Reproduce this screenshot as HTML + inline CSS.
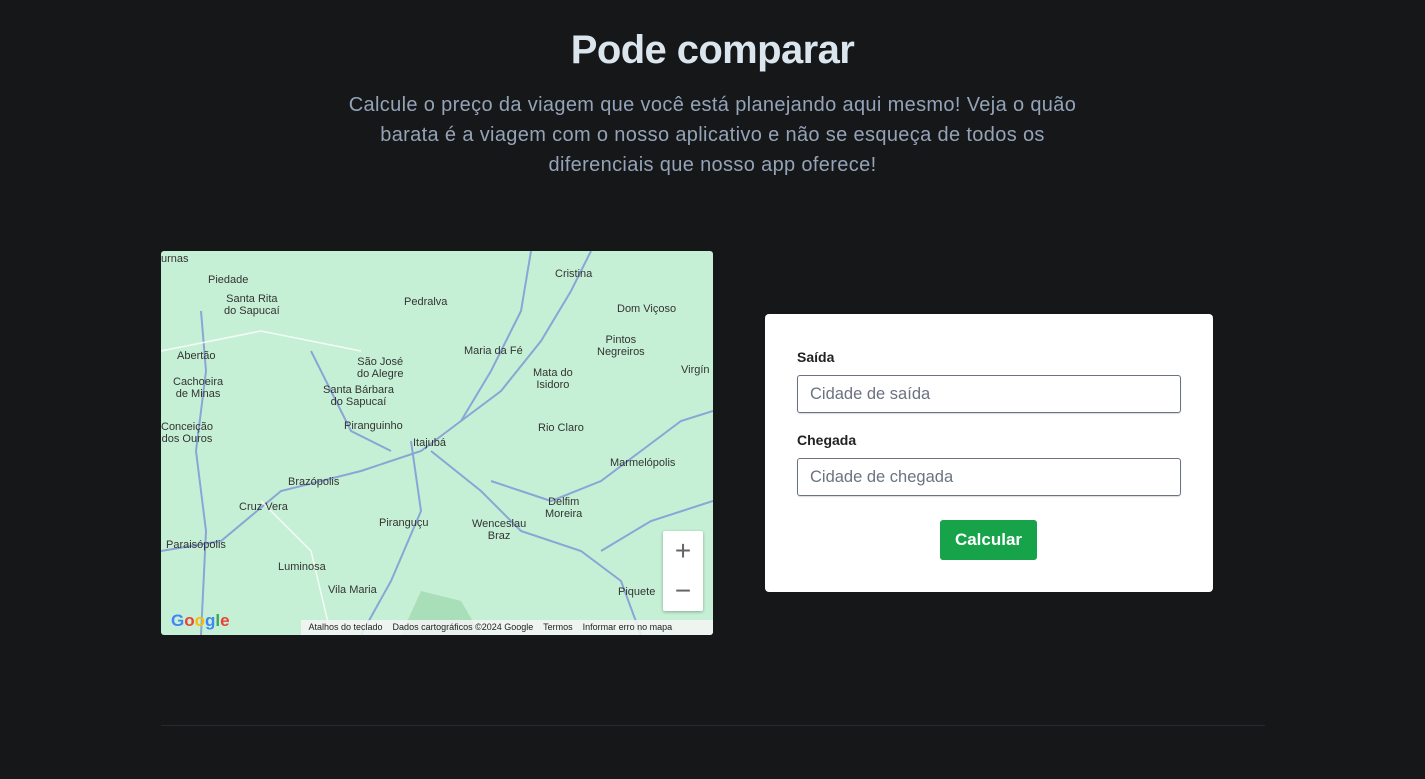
<!DOCTYPE html>
<html><head><meta charset="utf-8"><style>
body{margin:0;background:#161719;width:1425px;height:779px;overflow:hidden;font-family:"Liberation Sans",sans-serif;position:relative}
h1{position:absolute;top:26px;left:0;width:1425px;text-align:center;margin:0;color:#dbe5ee;font-size:40px;font-weight:bold;letter-spacing:-0.6px;line-height:48px}
.sub{position:absolute;top:90px;left:0;width:1425px;text-align:center;color:#94a3b8;font-size:20px;letter-spacing:0.35px;line-height:30px}
.map{position:absolute;left:161px;top:251px;width:552px;height:384px;background:#c6f0d5;overflow:hidden;border-radius:3px}
.map span{position:absolute;font-size:11px;color:#333;line-height:12px;text-align:center}
.card{position:absolute;left:765px;top:314px;width:448px;height:278px;background:#fff;border-radius:4px}
.lbl{position:absolute;left:32px;font-size:14px;font-weight:bold;color:#222}
.inp{position:absolute;left:32px;width:384px;height:38px;border:1px solid #6b7280;border-radius:3px;font-size:16.5px;color:#6b7280;line-height:36px;padding-left:12px;box-sizing:border-box;box-shadow:0 1px 1px rgba(0,0,0,.15)}
.btn{position:absolute;left:175px;top:206px;width:97px;height:40px;background:#16a34a;border-radius:3px;color:#fff;font-weight:bold;font-size:17px;text-align:center;line-height:40px}
.hr{position:absolute;left:161px;top:725px;width:1104px;height:1px;background:#26292e}
</style></head><body>
<h1>Pode comparar</h1>
<div class="sub">Calcule o preço da viagem que você está planejando aqui mesmo! Veja o quão<br>barata é a viagem com o nosso aplicativo e não se esqueça de todos os<br>diferenciais que nosso app oferece!</div>
<div class="map">
<svg width="552" height="384" style="position:absolute;left:0;top:0">
<g fill="none" stroke="#8aa5d6" stroke-width="2">
<path d="M40 60 L45 120 L35 200 L45 280 L40 384"/>
<path d="M0 300 L60 290 L120 240 L200 220 L260 200 L300 170 L340 140 L380 90 L410 40 L430 0"/>
<path d="M250 190 L260 260 L230 330 L200 384"/>
<path d="M270 200 L320 240 L360 280 L420 300 L460 330 L480 384"/>
<path d="M300 170 L330 120 L360 60 L370 0"/>
<path d="M330 230 L390 250 L440 230 L480 200 L520 170 L552 160"/>
<path d="M150 100 L170 140 L190 180 L230 200"/>
<path d="M440 300 L490 270 L552 250"/>
</g>
<g fill="none" stroke="#fff" stroke-width="1.5" opacity=".8"><path d="M0 100 L100 80 L200 100"/><path d="M100 250 L150 300 L170 384"/></g>
<path d="M240 384 L260 340 L300 350 L320 384Z" fill="#a9dfb8"/>
</svg>
<span style="left:0;top:2px">urnas</span><span style="left:47px;top:23px">Piedade</span>
<span style="left:63px;top:42px">Santa Rita<br>do Sapucaí</span><span style="left:243px;top:45px">Pedralva</span>
<span style="left:394px;top:17px">Cristina</span><span style="left:456px;top:52px">Dom Viçoso</span>
<span style="left:436px;top:83px">Pintos<br>Negreiros</span><span style="left:303px;top:94px">Maria da Fé</span>
<span style="left:16px;top:99px">Abertão</span><span style="left:196px;top:105px">São José<br>do Alegre</span>
<span style="left:372px;top:116px">Mata do<br>Isidoro</span><span style="left:520px;top:113px">Virgín</span>
<span style="left:12px;top:125px">Cachoeira<br>de Minas</span><span style="left:162px;top:133px">Santa Bárbara<br>do Sapucaí</span>
<span style="left:0;top:170px">Conceição<br>dos Ouros</span><span style="left:183px;top:169px">Piranguinho</span>
<span style="left:252px;top:186px">Itajubá</span><span style="left:377px;top:171px">Rio Claro</span>
<span style="left:449px;top:206px">Marmelópolis</span><span style="left:127px;top:225px">Brazópolis</span>
<span style="left:384px;top:245px">Delfim<br>Moreira</span><span style="left:78px;top:250px">Cruz Vera</span>
<span style="left:311px;top:267px">Wenceslau<br>Braz</span><span style="left:218px;top:266px">Piranguçu</span>
<span style="left:5px;top:288px">Paraisópolis</span><span style="left:117px;top:310px">Luminosa</span>
<span style="left:167px;top:333px">Vila Maria</span><span style="left:457px;top:335px">Piquete</span>
<div style="position:absolute;left:502px;top:280px;width:40px;height:80px;background:#fff;border-radius:2px;box-shadow:0 1px 3px rgba(0,0,0,.3);color:#666;font-size:28px;text-align:center;line-height:40px">+<br>−</div>
<div style="position:absolute;left:10px;top:360px;font-size:17px;font-weight:bold;color:#4285f4">G<span style="position:static;color:#ea4335;font-size:17px">o</span><span style="position:static;color:#fbbc05;font-size:17px">o</span>g<span style="position:static;color:#34a853;font-size:17px">l</span><span style="position:static;color:#ea4335;font-size:17px">e</span></div>
<div style="position:absolute;left:140px;top:369px;width:412px;height:15px;background:rgba(245,245,245,.85);font-size:9px;color:#222;line-height:15px;white-space:nowrap">&nbsp;&nbsp;&nbsp;Atalhos do teclado &nbsp;&nbsp; Dados cartográficos ©2024 Google &nbsp;&nbsp; Termos &nbsp;&nbsp; Informar erro no mapa</div>
</div>
<div class="card">
<div class="lbl" style="top:35px">Saída</div>
<div class="inp" style="top:61px">Cidade de saída</div>
<div class="lbl" style="top:118px">Chegada</div>
<div class="inp" style="top:144px">Cidade de chegada</div>
<div class="btn">Calcular</div>
</div>
<div class="hr"></div>
</body></html>
